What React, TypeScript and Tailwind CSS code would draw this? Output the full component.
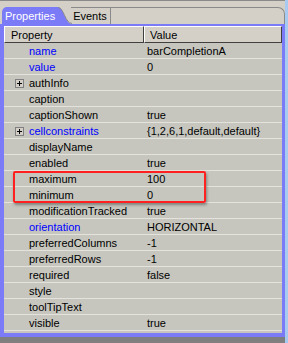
import React from "react";

type Row = { name: string; value?: string; blue?: boolean; expand?: boolean };

const rows: Row[] = [
  { name: "name", value: "barCompletionA", blue: true },
  { name: "value", value: "0", blue: true },
  { name: "authInfo", expand: true },
  { name: "caption" },
  { name: "captionShown", value: "true" },
  { name: "cellconstraints", value: "{1,2,6,1,default,default}", blue: true, expand: true },
  { name: "displayName" },
  { name: "enabled", value: "true" },
  { name: "maximum", value: "100" },
  { name: "minimum", value: "0" },
  { name: "modificationTracked", value: "true" },
  { name: "orientation", value: "HORIZONTAL", blue: true },
  { name: "preferredColumns", value: "-1" },
  { name: "preferredRows", value: "-1" },
  { name: "required", value: "false" },
  { name: "style" },
  { name: "toolTipText" },
  { name: "visible", value: "true" },
];

const PlusBox = () => (
  <div className="w-[9px] h-[9px] border border-[#808080] bg-[#d4d0c8] flex items-center justify-center">
    <svg width="7" height="7" viewBox="0 0 7 7">
      <path d="M1 3.5h5M3.5 1v5" stroke="#000" strokeWidth="1" />
    </svg>
  </div>
);

const App = () => {
  return (
    <div
      className="w-[288px] h-[343px] bg-[#7f7f7f] flex overflow-hidden text-[11px] leading-none"
      style={{ fontFamily: '"Liberation Sans", Arial, sans-serif' }}
    >
      <div className="w-[285px] flex flex-col">
        {/* Tab strip */}
        <div className="h-[24px] bg-[#d4d0c8] border-t border-[#8a8a8a] flex items-end">
          <div className="ml-[2px] h-[17px] bg-[#7b7bf7] rounded-tl-[5px] pl-[3px] pr-[3px] pt-px flex items-center text-white">
            Properties
          </div>
          <svg width="14" height="17" viewBox="0 0 14 17" className="block">
            <path d="M0 0 C6 0 7 17 14 17 L0 17 Z" fill="#7b7bf7" />
            <path d="M0 0.5 C6 0.5 7 16.5 14 16.5" stroke="#8a8a8a" fill="none" />
          </svg>
          <div className="h-[17px] w-[40px] -ml-[1px] border-t border-r border-[#8a8a8a] flex items-center pl-[2px] pt-px text-black">
            Events
          </div>
          <div className="flex-1 h-[17px] border-t border-r border-[#8a8a8a] rounded-tr-[7px]" />
        </div>

        {/* Panel */}
        <div className="flex-1 border-l-4 border-r-[3px] border-t-2 border-b-4 border-[#7b7bf7] bg-[#c6c6be] flex flex-col relative">
          <div className="flex h-[17px] bg-[#d4d0c8]">
            <div className="w-[140px] border-t border-l border-white border-b border-r border-b-[#404040] border-r-[#404040] flex items-center pl-[6px] pt-px text-black">
              Property
            </div>
            <div className="flex-1 border-t border-l border-white border-b border-r border-b-[#404040] border-r-[#404040] flex items-center pl-[5px] pt-px text-black">
              Value
            </div>
          </div>
          {rows.map((r) => (
            <div key={r.name} className="flex h-[16px] border-b border-[#e4e2dc] pt-px">
              <div className="w-[140px] flex items-center">
                <div className="w-[11px] ml-[11px] mr-[3px] flex items-center">
                  {r.expand && <PlusBox />}
                </div>
                <span className={r.blue ? "text-[#0000ff]" : "text-black"}>{r.name}</span>
              </div>
              <div className="flex-1 flex items-center pl-[3px] text-black">{r.value}</div>
            </div>
          ))}

          {/* highlight box */}
          <div className="absolute left-[9px] top-[145px] w-[193px] h-[32px] border-2 border-[#ff2020] rounded-[2px] shadow-[1px_2px_3px_rgba(0,0,0,0.35)]" />
        </div>
        <div className="h-[6px]" />
      </div>
      <div className="w-[3px] bg-[#a6caf0]" />
    </div>
  );
};

export default App;
